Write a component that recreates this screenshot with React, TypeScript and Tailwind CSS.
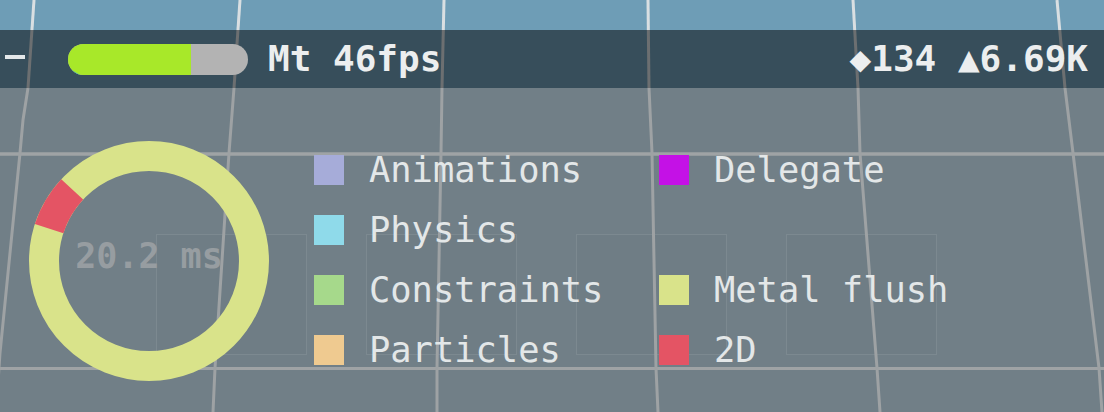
import React from 'react';

const mono = { fontFamily: '"DejaVu Sans Mono", "Liberation Mono", monospace' };

const legend = [
  { label: 'Animations', color: 'bg-[#a6acd9]' },
  { label: 'Delegate', color: 'bg-[#c411e6]' },
  { label: 'Physics', color: 'bg-[#8fdaea]' },
  null,
  { label: 'Constraints', color: 'bg-[#a6d98b]' },
  { label: 'Metal flush', color: 'bg-[#d9e38a]' },
  { label: 'Particles', color: 'bg-[#efca90]' },
  { label: '2D', color: 'bg-[#e45464]' },
];

// perspective grid of the 3D scene behind the overlay
const skyLines = [
  '34,0 28,88',
  '240,0 234,88',
  '444,0 442,88',
  '648,0 649,88',
  '853,0 858,88',
  '1057,0 1065,88',
];

const floorLines = [
  '28,88 23,120 20,153 0,353 -4,412',
  '234,88 229,153 215,368 213,412',
  '442,88 441,153 437,368 437,412',
  '649,88 652,153 656,368 658,412',
  '858,88 860,153 877,368 880,412',
  '1065,88 1073,153 1099,368 1102,412',
];

const boxes = [156, 366, 576, 786];

const Scene: React.FC = () => (
  <svg className="absolute inset-0" width={1104} height={412} viewBox="0 0 1104 412">
    <rect x={0} y={0} width={1104} height={88} fill="#6e9db6" />
    <rect x={0} y={88} width={1104} height={324} fill="#717f87" />
    {boxes.map((x) => (
      <rect key={x} x={x + 0.5} y={234.5} width={150} height={120} fill="#6f7d85" stroke="#7c8990" strokeWidth={1} />
    ))}
    <line x1={0} y1={154} x2={1104} y2={154} stroke="#9fa3a5" strokeWidth={3.5} />
    <line x1={0} y1={368.5} x2={1104} y2={368.5} stroke="#9fa3a5" strokeWidth={3} />
    {skyLines.map((p) => (
      <polyline key={p} points={p} fill="none" stroke="#d9dfe2" strokeWidth={3} />
    ))}
    {floorLines.map((p) => (
      <polyline key={p} points={p} fill="none" stroke="#9ea2a4" strokeWidth={3} />
    ))}
  </svg>
);

const Donut: React.FC = () => (
  <div className="grid place-items-center w-[240px] h-[240px] mt-[1px]">
    <svg className="col-start-1 row-start-1" width={240} height={240} viewBox="0 0 240 240">
      <circle cx={120} cy={120} r={105} fill="none" stroke="#d9e38a" strokeWidth={30} />
      <path d="M 20.14 87.56 A 105 105 0 0 1 43.2 48.39" fill="none" stroke="#e45464" strokeWidth={30} />
    </svg>
    <span className="col-start-1 row-start-1 mb-[9px] text-[35px] font-bold leading-none text-[#979da1] whitespace-pre" style={mono}>
      20.2 ms
    </span>
  </div>
);

export default function App() {
  return (
    <div className="relative w-[1104px] h-[412px] overflow-hidden" style={mono}>
      <Scene />

      <div className="relative pt-[30px]">
        {/* Top stats bar */}
        <div className="h-[58px] bg-black/50 flex items-center justify-between">
          <div className="flex items-center ml-[5px]">
            <div className="w-[20px] h-[4px] mb-[4px] bg-[#e4e8ea]" />
            <div className="relative ml-[43px] w-[180px] h-[31px] rounded-full overflow-hidden flex bg-[#b3b3b3]">
              <div className="w-[123px] h-full bg-[#a8e829]" />
              <svg className="absolute left-0 bottom-0" width={14} height={10} viewBox="0 0 14 10">
                <polygon points="0,3 12,10 0,10" fill="#2ea4dc" />
              </svg>
            </div>
            <span className="ml-[20px] text-[36px] font-bold leading-none text-[#eceeef] whitespace-pre">
              Mt 46fps
            </span>
          </div>
          <span className="pr-[16px] text-[36px] font-bold leading-none text-[#eceeef] whitespace-pre">
            ◆134 ▲6.69K
          </span>
        </div>

        {/* Frame time donut + legend */}
        <div className="flex items-start pl-[29px] pt-[52px]">
          <Donut />
          <div className="ml-[45px] grid grid-cols-[345px_auto]">
            {legend.map((item, i) => (
              <div key={i} className="h-[60px] flex items-center gap-[25px]">
                {item && (
                  <>
                    <div className={`w-[30px] h-[30px] ${item.color}`} />
                    <span className="text-[35.4px] leading-none text-[#e3e7e8] whitespace-pre">
                      {item.label}
                    </span>
                  </>
                )}
              </div>
            ))}
          </div>
        </div>
      </div>
    </div>
  );
}
